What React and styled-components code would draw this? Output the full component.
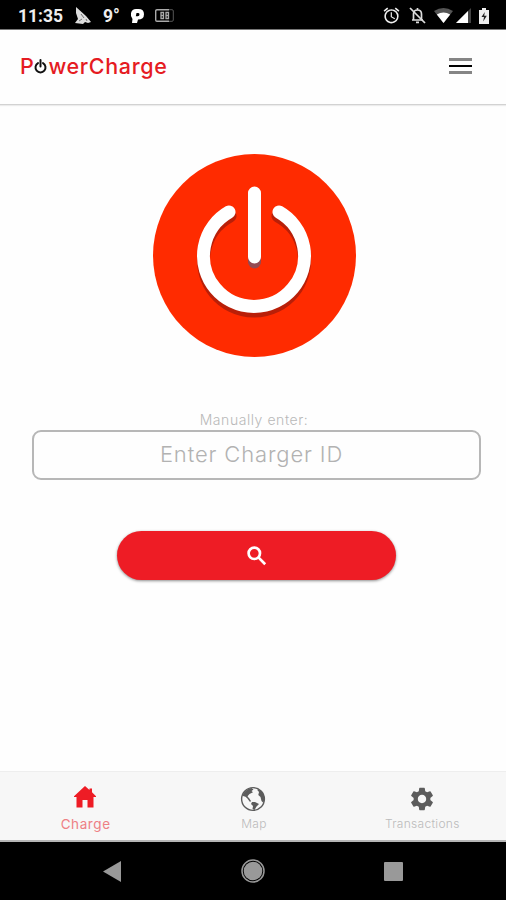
import React from 'react';
import styled, { createGlobalStyle, css } from 'styled-components';
import { MdSettings, MdAlarm } from 'react-icons/md';

const GlobalStyle = createGlobalStyle`
*{box-sizing:border-box;}
body{margin:0;background:#fefefe;font-family:Inter,"Open Sans",sans-serif;}
button,input{font-family:inherit;}
`

const Screen = styled.div`
display:flex;
flex-direction:column;
width:506px;
height:900px;
overflow:hidden;
background:#fefefe;
`

const StatusBar = styled.div`
display:flex;
align-items:center;
justify-content:space-between;
height:30px;
padding:2px 17px 0 18px;
border-bottom:1px solid #777;
background:#000;
color:#eee;
`

const StatusGroup = styled.div`
display:flex;
align-items:center;
gap:${({$gap})=>$gap}px;
svg{display:block;flex:none;}
`

const Clock = styled.span`
width:45px;
font:700 17.5px/20px Roboto,sans-serif;
white-space:nowrap;
`

const Degrees = styled(Clock)`
width:17px;
`

const Header = styled.header`
display:flex;
align-items:center;
justify-content:space-between;
height:75px;
padding:0 34px 2px 20px;
border-bottom:1px solid #d2d2d2;
box-shadow:0 1px 1px #ececec;
`

const Logo = styled.h1`
display:flex;
align-items:center;
margin:0;
color:#e51b22;
font-size:21.5px;
font-weight:500;
line-height:26px;
letter-spacing:.65px;
svg{margin:1px 1px 0 0;}
`

const MenuButton = styled.button`
display:flex;
flex-direction:column;
justify-content:space-between;
width:23px;
height:16px;
padding:0;
border:0;
background:none;
`

const MenuLine = styled.span`
height:${({$dark})=>$dark?2:3}px;
background:${({$dark})=>$dark?'#000':'#858585'};
`

const Main = styled.main`
display:flex;
flex:1;
flex-direction:column;
align-items:center;
padding-top:49px;
`

const PowerButton = styled.button`
width:203px;
height:203px;
margin-right:-2px;
padding:0;
border:0;
border-radius:50%;
background:#ff2b00;
svg{display:block;}
`

const Label = styled.label`
margin:54px 0 0 2px;
color:#b9b9b9;
font-size:14px;
font-weight:300;
line-height:18px;
letter-spacing:.55px;
`

const ChargerInput = styled.input`
width:449px;
height:50px;
margin:1px 0 0 6px;
padding:0 9px 3px 0;
border:2px solid #b7b7b7;
border-radius:9px;
outline:0;
background:#fefefe;
color:#777;
font-size:22px;
font-weight:300;
letter-spacing:.85px;
text-align:center;
&::placeholder{color:#b2b2b2;opacity:1;}
`

const SearchButton = styled.button`
display:flex;
align-items:center;
justify-content:center;
width:279px;
height:49px;
margin:51px 0 0 7px;
padding:0;
border:0;
border-radius:25px;
background:#ee1c25;
color:#fff;
box-shadow:0 1px 3px rgba(0,0,0,.45);
`

const Tabs = styled.nav`
display:grid;
grid-template-columns:repeat(3,1fr);
height:71px;
padding-left:1px;
border-top:1px solid #eee;
border-bottom:2px solid #b5b5b5;
background:#f7f7f7;
`

const Tab = styled.a`
display:flex;
flex-direction:column;
align-items:center;
padding-top:13px;
color:#5c5c5c;
svg{display:block;height:28px;}
${({$active})=>$active&&css`
color:#ee1c25;
`}
`

const TabName = styled.span`
margin:2px 0 0 1px;
color:${({$active})=>$active?'#ee8085':'#bbb'};
font-size:${({$active})=>$active?13.5:12}px;
font-weight:${({$active})=>$active?400:300};
line-height:18px;
letter-spacing:${({$active})=>$active?.6:.3}px;
`

const AndroidBar = styled.div`
display:flex;
align-items:center;
justify-content:space-between;
height:58px;
padding:0 103px;
background:#000;
svg{display:block;}
`

const SatelliteIcon = () => (
    <svg width="18" height="18" viewBox="0 0 18 18">
        <path fill="#ddd" d="M2 0L12 9L17 15L14 16L11 15L9 17L1 16L4 12L2 6Z"/>
        <path d="M7 7L10 11M5 14L8 12M12 12L13 14" stroke="#555" strokeWidth=".8"/>
    </svg>
)

const ParkingIcon = () => (
    <svg width="13" height="16" viewBox="0 0 13 16">
        <path fill="#fff" fillRule="evenodd" d="M5 1H7.5Q13 1 13 6.3Q13 11.5 7 11.5L6 15H1L1.5 11L0 8V5Q1 1 5 1ZM5.5 5L4.8 8.2H6.8Q8.5 8 8.5 6.4Q8.5 5 7 5Z"/>
    </svg>
)

const CounterIcon = () => (
    <svg width="19" height="13" viewBox="0 0 19 13" fill="none" stroke="#aaa">
        <path d="M14 .7H2Q.7 .7 .7 2V11Q.7 12.3 2 12.3H14" strokeWidth="1.4"/>
        <path d="M14 .7H17Q18.3 .7 18.3 2V11Q18.3 12.3 17 12.3H14" stroke="#555"/>
        <path d="M6 3.5H8.5V9.5H6ZM6 6.5H8.5M11 3.5H13.5V9.5H11ZM11 6.5H13.5" strokeWidth="1.3"/>
    </svg>
)

const BellOffIcon = () => (
    <svg width="17" height="17" viewBox="0 0 17 17" fill="none" stroke="#ddd" strokeWidth="1.7">
        <path d="M3 13H14M4.5 13V7Q4.5 3 8.5 3Q12.5 3 12.5 7V13M8.5 1V3M7 15.3H10"/>
        <path d="M1 1L16 16"/>
    </svg>
)

const WifiIcon = () => (
    <svg width="19" height="15" viewBox="0 0 19 15">
        <path d="M0 3Q9.5-3 19 3L9.5 15Z" fill="#555"/>
        <path d="M2.8 6.5Q9.5 2.5 16.2 6.5L9.5 15Z" fill="#fff"/>
    </svg>
)

const SignalIcon = () => (
    <svg width="15" height="15" viewBox="0 0 15 15">
        <path d="M15 0V15H0Z" fill="#444"/>
        <path d="M12 3V15H0Z" fill="#fff"/>
    </svg>
)

const BatteryIcon = () => (
    <svg width="10" height="16" viewBox="0 0 10 16">
        <path d="M3 0H7V2H10V16H0V2H3Z" fill="#eee"/>
        <path d="M5.8 4L2.5 9H5L4.2 13.5L7.8 7.8H5.2Z" fill="#222"/>
    </svg>
)

const LogoPower = () => (
    <svg width="13" height="15" viewBox="0 0 13 15" fill="none" stroke="#111" strokeWidth="2" strokeLinecap="round">
        <path d="M4 4.1A5 5 0 1 0 9 4.1M6.5 1V7.5"/>
    </svg>
)

const PowerIcon = () => (
    <svg width="203" height="203" viewBox="0 0 203 203" fill="none" strokeWidth="13" strokeLinecap="round">
        <path d="M77 62A50.5 50.5 0 1 0 125 62" stroke="#b91f08"/>
        <path d="M101.5 43V108" stroke="#944a52"/>
        <path d="M76 58A50.5 50.5 0 1 0 126 58M101.5 39V103" stroke="#fff"/>
    </svg>
)

const SearchIcon = () => (
    <svg width="20" height="20" viewBox="0 0 20 20" fill="none" stroke="#fff" strokeWidth="2.7">
        <circle cx="7.3" cy="7.3" r="5.7"/>
        <path d="M11.4 11.4L18.2 18.2"/>
    </svg>
)

const HomeIcon = () => (
    <svg width="22" height="28" viewBox="0 0 22 28" fill="currentColor">
        <path d="M11 1L15.5 5V3.5H18V7.3L22 11.3V12H19.5V22.5H13.5V15H8.5V22.5H2.5V12H0V11.3Z"/>
    </svg>
)

const EarthIcon = () => (
    <svg width="26" height="28" viewBox="0 0 26 28">
        <circle cx="13" cy="14" r="11.4" fill="none" stroke="currentColor" strokeWidth="1.4"/>
        <path fill="currentColor" d="M3 9.5Q5.5 4 11.5 3L13.5 4.5L11.5 6L13 7.2L9.5 9L7.5 11.2L9 13.2L8 14L5.5 11.8L3 11ZM7 13L9 13L11 16L10 17ZM12 17L15 17L19 19L16.5 21.5L14.5 25L12.5 24L13 21L11 19ZM18 4Q24 7 24.5 13L23.5 18L21.5 16L20.5 12L18.3 10L19 7L17.3 5Z"/>
    </svg>
)

const App = () => {
    return (
        <>
            <GlobalStyle />
            <Screen>
                <StatusBar>
                    <StatusGroup $gap={11}>
                        <Clock>11:35</Clock>
                        <SatelliteIcon />
                        <Degrees>9°</Degrees>
                        <ParkingIcon />
                        <CounterIcon />
                    </StatusGroup>
                    <StatusGroup $gap={8}>
                        <MdAlarm size={19}/>
                        <BellOffIcon />
                        <StatusGroup $gap={3}>
                            <WifiIcon />
                            <SignalIcon />
                        </StatusGroup>
                        <BatteryIcon />
                    </StatusGroup>
                </StatusBar>
                <Header>
                    <Logo>P<LogoPower />werCharge</Logo>
                    <MenuButton aria-label="Menu">
                        <MenuLine /><MenuLine $dark /><MenuLine />
                    </MenuButton>
                </Header>
                <Main>
                    <PowerButton aria-label="Power"><PowerIcon /></PowerButton>
                    <Label htmlFor="charger">Manually enter:</Label>
                    <ChargerInput id="charger" placeholder="Enter Charger ID" />
                    <SearchButton aria-label="Search"><SearchIcon /></SearchButton>
                </Main>
                <Tabs>
                    <Tab $active><HomeIcon /><TabName $active>Charge</TabName></Tab>
                    <Tab><EarthIcon /><TabName>Map</TabName></Tab>
                    <Tab><MdSettings size={28}/><TabName>Transactions</TabName></Tab>
                </Tabs>
                <AndroidBar>
                    <svg width="19" height="21" viewBox="0 0 19 21"><path d="M0 10.5L18 0V21Z" fill="#999"/></svg>
                    <svg width="24" height="24" viewBox="0 0 24 24"><circle cx="12" cy="12" r="11" fill="none" stroke="#999" strokeWidth="1.5"/><circle cx="12" cy="12" r="9.3" fill="#999"/></svg>
                    <svg width="19" height="19" viewBox="0 0 19 19"><rect width="19" height="19" rx="1" fill="#999"/></svg>
                </AndroidBar>
            </Screen>
        </>
    )
}

export default App;
